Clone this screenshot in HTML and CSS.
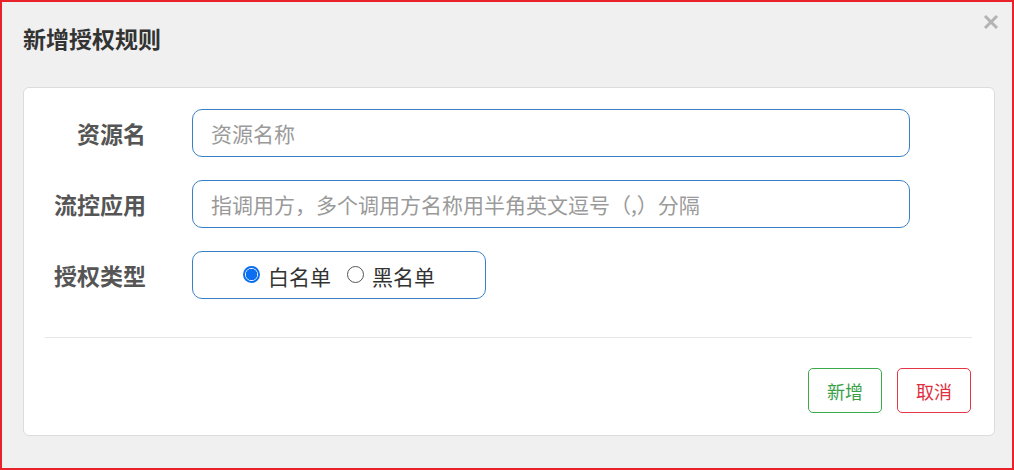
FILE: index.html
```html
<!DOCTYPE html>
<html lang="zh-CN">
<head>
<meta charset="utf-8">
<title>新增授权规则</title>
<link rel="stylesheet" href="styles.css">
</head>
<body>
<div class="dialog">
  <div class="dialog-header">
    <h1 class="dialog-title">新增授权规则</h1>
    <button class="close-btn" aria-label="关闭">
      <svg width="16" height="16" viewBox="0 0 16 16"><path d="M2 2 L14 14 M14 2 L2 14" stroke="#b3b3b3" stroke-width="3" stroke-linecap="butt"/></svg>
    </button>
  </div>
  <div class="card">
    <div class="form">
      <label class="form-label">资源名</label>
      <input class="form-input" type="text" placeholder="资源名称">
      <label class="form-label">流控应用</label>
      <input class="form-input" type="text" placeholder="指调用方，多个调用方名称用半角英文逗号（,）分隔">
      <label class="form-label">授权类型</label>
      <div class="radio-group">
        <span class="radio-item"><span class="radio checked"></span>白名单</span>
        <span class="radio-item"><span class="radio"></span>黑名单</span>
      </div>
    </div>
    <div class="divider"></div>
    <div class="actions">
      <button class="btn btn-add">新增</button>
      <button class="btn btn-cancel">取消</button>
    </div>
  </div>
</div>
</body>
</html>
```

FILE: styles.css
```css
* { box-sizing: border-box; }
html, body { margin: 0; padding: 0; }
body {
  font-family: "Microsoft YaHei", "Noto Sans CJK SC", "Noto Sans", sans-serif;
  background: #f0f0f0;
}
.dialog {
  width: 1014px;
  height: 470px;
  border: 2px solid #e8212a;
  background: #f0f0f0;
  padding: 0 17px 0 21px;
}
.dialog-header {
  height: 85px;
  display: flex;
  align-items: flex-start;
  justify-content: space-between;
}
.dialog-title {
  margin: 20px 0 0 0;
  font-size: 23px;
  line-height: 32px;
  font-weight: bold;
  color: #333;
}
.close-btn {
  margin: 12px -4px 0 0;
  padding: 0;
  border: 0;
  background: transparent;
  width: 16px;
  height: 16px;
  display: flex;
}
.card {
  width: 972px;
  height: 349px;
  background: #fff;
  border: 1px solid #dcdcdc;
  border-radius: 6px;
  padding: 21px 22px 0 21px;
}
.form {
  display: grid;
  grid-template-columns: 101px 718px;
  column-gap: 46px;
  row-gap: 23px;
  align-items: center;
}
.form-label {
  text-align: right;
  font-size: 23px;
  font-weight: bold;
  color: #555;
  line-height: 30px;
  white-space: nowrap;
}
.form-input {
  height: 48px;
  border: 1px solid #3a80c5;
  border-radius: 10px;
  padding: 0 18px;
  font-family: inherit;
  font-size: 21px;
  color: #333;
  outline: none;
}
.form-input::placeholder { color: #9a9a9a; }
.radio-group {
  width: 294px;
  height: 48px;
  border: 1px solid #3a80c5;
  border-radius: 10px;
  display: flex;
  align-items: center;
  justify-content: center;
  gap: 16px;
  font-size: 21px;
  color: #333;
  padding-top: 2px;
}
.radio-item {
  display: flex;
  align-items: center;
  gap: 8px;
}
.radio {
  width: 17px;
  height: 17px;
  border-radius: 50%;
  border: 1.5px solid #555;
  background: #fff;
  margin-top: -3px;
}
.radio.checked {
  border: 2px solid #0b6ff0;
  background: radial-gradient(circle, #0b6ff0 0 5.5px, #fff 6px);
}
.divider {
  height: 1px;
  background: #e6e6e6;
  margin-top: 38px;
}
.actions {
  display: flex;
  justify-content: flex-end;
  gap: 15px;
  margin-top: 30px;
  padding-right: 1px;
}
.btn {
  width: 74px;
  height: 45px;
  background: #fff;
  border-radius: 5px;
  font-family: inherit;
  font-size: 18px;
  padding: 0;
}
.btn-add { border: 1px solid #3aaa4b; color: #3aa048; }
.btn-cancel { border: 1px solid #e33545; color: #e0303f; }
```
